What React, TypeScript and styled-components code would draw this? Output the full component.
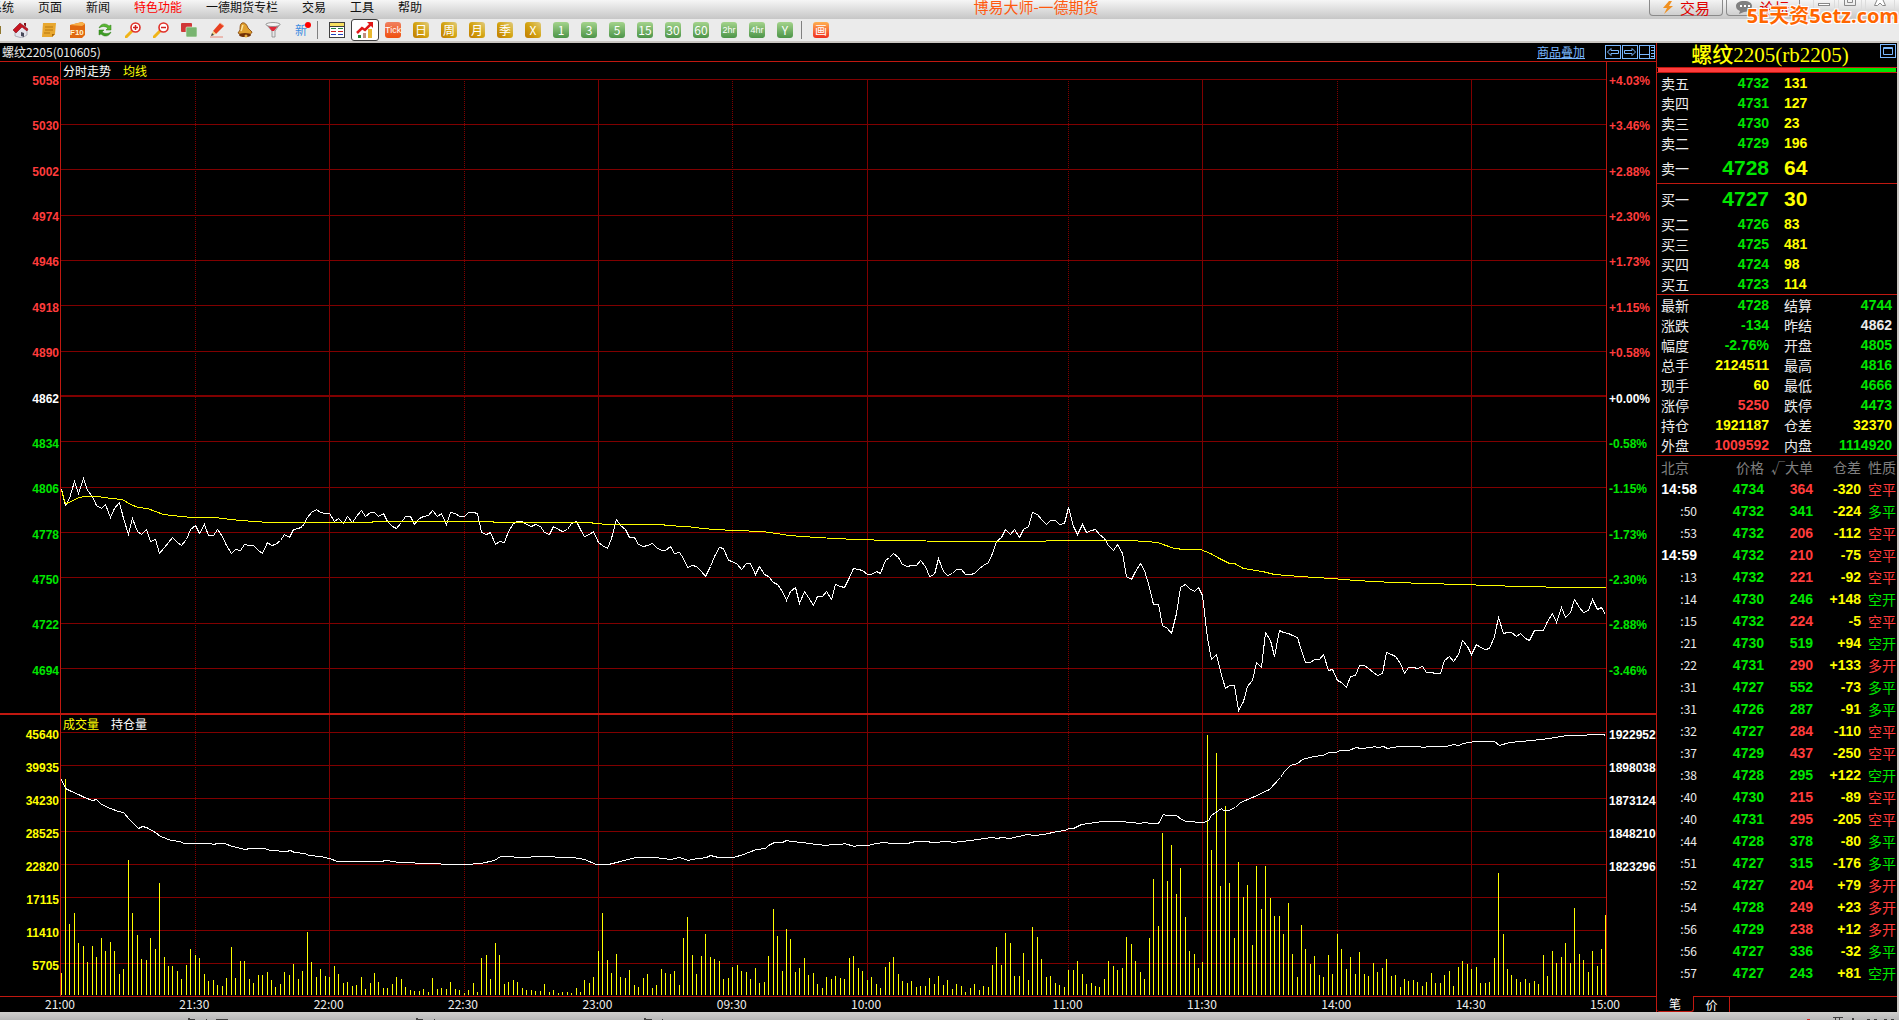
import React from 'react';
import styled, { createGlobalStyle, css } from 'styled-components';

const C = {
  line: '#c01810',
  grid: '#800000',
  up: '#ff3c3c',
  down: '#00e600',
  hot: '#ffff00',
  plain: '#ececec',
  dim: '#808080',
  link: '#7ab8ff',
};

type Tone = 'up' | 'down' | 'hot' | 'plain' | 'dim';

const sans = `'Liberation Sans', 'Noto Sans CJK SC', sans-serif`;
const cjk = `'Noto Sans CJK SC', 'Liberation Sans', sans-serif`;

const Global = createGlobalStyle`
  * { box-sizing: border-box; }
  html, body { margin: 0; background: #000; }
  body { font-family: ${cjk}; font-size: 12px; color: ${C.plain}; }
  button { font: inherit; padding: 0; margin: 0; border: 0; background: none; color: inherit; }
  a { color: inherit; text-decoration: none; }
`;

const Shell = styled.div`
  display: flex;
  flex-direction: column;
  height: 100vh;
  min-height: 900px;
  overflow: hidden;
`;

/* ---------- menu bar ---------- */

const MenuBar = styled.header`
  position: relative;
  display: flex;
  justify-content: space-between;
  flex: none;
  height: 19px;
  background: linear-gradient(#f6f6f6, #c6c6c6);
`;
const Menu = styled.nav`
  display: flex;
  gap: 24px;
  margin-left: -10px;
`;
const MenuItem = styled.a<{ $hot?: boolean }>`
  font-size: 12px;
  line-height: 14px;
  white-space: nowrap;
  color: ${(p) => (p.$hot ? '#ff0000' : '#101010')};
`;
const AppTitle = styled.h1`
  flex: none;
  margin: 0;
  font-size: 15px;
  font-weight: 400;
  line-height: 13px;
  color: #ff5a10;
`;
const MenuSide = styled.div<{ $share: number }>`
  flex: ${(p) => p.$share} 1 0;
  display: flex;
`;
const Controls = styled(MenuSide)`
  justify-content: flex-end;
  gap: 3px;
  padding-right: 4px;
`;
const WindowButtons = styled.div`
  display: flex;
  gap: 3px;
  margin-left: 10px;
`;
const PillButton = styled.button`
  display: flex;
  align-items: center;
  justify-content: center;
  gap: 6px;
  width: 74px;
  height: 16px;
  border: 1px solid #8a8a8a;
  border-top: 0;
  border-radius: 0 0 4px 4px;
  background: linear-gradient(#f4f4f4, #cfcfcf);
  color: #e00000;
  font-size: 15px;
  line-height: 12px;
`;
const WinButton = styled.button<{ $w: number }>`
  width: ${(p) => p.$w}px;
  height: 10px;
  display: flex;
  justify-content: center;
  border: 1px solid #dcdcdc;
  border-top: 0;
`;
const Watermark = styled.div`
  position: absolute;
  z-index: 2;
  right: 0;
  top: 2px;
  font-family: 'Open Sans', 'Noto Sans CJK SC', sans-serif;
  font-size: 20px;
  font-weight: 700;
  line-height: 28px;
  color: #ff6600;
  text-shadow: 1px 1px 0 #fff, -1px 1px 0 #fff, 1px -1px 0 #fff, -1px -1px 0 #fff;
`;

/* ---------- toolbar ---------- */

const Toolbar = styled.div`
  display: flex;
  align-items: center;
  flex: none;
  height: 24px;
  background: #ebebeb;
  border-bottom: 2px solid #cac6c2;
`;
const Tool = styled.button<{ $active?: boolean }>`
  display: flex;
  align-items: center;
  justify-content: center;
  width: 28px;
  height: 22px;
  ${(p) =>
    p.$active &&
    css`
      background: #fff;
      border: 1px solid #404040;
      border-radius: 3px;
    `}
`;
const Grip = styled.span`
  width: 1px;
  height: 8px;
  margin-right: 6px;
  background: #907830;
`;
const Divider = styled.span`
  width: 1px;
  height: 18px;
  margin: 0 5px 0 2px;
  background: #808080;
`;
const fills = {
  gold: 'linear-gradient(to top right, #c07c00, #d4a410 50%, #e0cc80)',
  green: 'linear-gradient(#a4d48c, #4c9448)',
  tick: 'linear-gradient(#f08060, #f05010)',
  paint: 'linear-gradient(#ffb050, #f03020)',
};
const Badge = styled.span<{ $fill: keyof typeof fills }>`
  width: 16px;
  height: 16px;
  border-radius: 3px;
  background: ${(p) => fills[p.$fill]};
  color: #fff;
  font-size: 12px;
  line-height: 15px;
  text-align: center;
`;
const NarrowBadge = styled(Badge)`
  font-family: 'Liberation Sans', sans-serif;
  font-size: 9px;
  line-height: 16px;
`;
const NewMark = styled.span`
  position: relative;
  font-size: 12px;
  line-height: 16px;
  color: #3c8ce0;
  &::after {
    content: '';
    position: absolute;
    right: -4px;
    top: 0;
    width: 6px;
    height: 6px;
    border-radius: 50%;
    background: #ff0000;
  }
`;

/* ---------- chart ---------- */

const Main = styled.main`
  display: flex;
  flex: 1;
  min-height: 0;
  border-right: 2px solid #cac6c2;
`;
const ChartColumn = styled.section`
  display: flex;
  flex-direction: column;
  flex: 1;
  min-width: 0;
  border-right: 1px solid ${C.line};
`;
const ChartHead = styled.div`
  display: flex;
  align-items: center;
  flex: none;
  height: 19px;
  padding: 0 1px 0 2px;
  border-bottom: 1px solid ${C.line};
  line-height: 18px;
`;
const HeadTools = styled.div`
  display: flex;
  align-items: center;
  gap: 1px;
  margin-left: auto;
  color: ${C.link};
`;
const OverlayLink = styled.a`
  margin-right: 19px;
  color: ${C.link};
  text-decoration: underline;
`;
const IconButton = styled.button`
  display: flex;
  width: 16px;
  height: 14px;
  color: ${C.link};
`;
const Pane = styled.div<{ $weight: number }>`
  display: flex;
  flex: ${(p) => p.$weight} 1 0;
  min-height: 0;
`;
const Splitter = styled.div`
  flex: none;
  height: 2px;
  background: ${C.line};
`;
const Axis = styled.ol<{ $side: 'left' | 'right'; $top: number; $bottom: number }>`
  display: flex;
  flex-direction: column;
  flex: none;
  margin: 0;
  list-style: none;
  font: 700 12px/16px ${sans};
  padding: ${(p) => p.$top}px 1px ${(p) => p.$bottom}px 2px;
  ${(p) =>
    p.$side === 'left'
      ? css`
          width: 61px;
          text-align: right;
          border-right: 1px solid ${C.line};
        `
      : css`
          width: 50px;
          border-left: 1px solid ${C.line};
        `}
`;
const AxisLabel = styled.li<{ $tone: Tone }>`
  flex: 1 1 0;
  min-height: 0;
  white-space: nowrap;
  color: ${(p) => (p.$tone === 'plain' ? '#fff' : C[p.$tone])};
`;
const Plot = styled.div`
  position: relative;
  flex: 1;
  min-width: 0;
`;
const Canvas = styled.svg`
  position: absolute;
  inset: 0;
  width: 100%;
  height: 100%;
  shape-rendering: crispEdges;
`;
const Legend = styled.div`
  position: absolute;
  left: 2px;
  top: 0;
  display: flex;
  gap: 12px;
  line-height: 18px;
`;
const LegendItem = styled.span<{ $tone: Tone }>`
  color: ${(p) => (p.$tone === 'plain' ? '#fff' : C[p.$tone])};
`;
const TimeRow = styled.div`
  display: grid;
  grid-template-columns: repeat(6, 30fr) 45fr repeat(4, 30fr) 66px;
  flex: none;
  height: 16px;
  padding-left: 45px;
  border-top: 1px solid ${C.line};
  line-height: 14px;
`;

const LABEL_PRICES = [5058, 5030, 5002, 4974, 4946, 4918, 4890, 4862, 4834, 4806, 4778, 4750, 4722, 4694];
const LABEL_PCTS = ['+4.03%', '+3.46%', '+2.88%', '+2.30%', '+1.73%', '+1.15%', '+0.58%', '+0.00%', '-0.58%', '-1.15%', '-1.73%', '-2.30%', '-2.88%', '-3.46%'];
const LABEL_VOLUMES = [45640, 39935, 34230, 28525, 22820, 17115, 11410, 5705];
const LABEL_OPEN_INTEREST = ['1922952', '1898038', '1873124', '1848210', '1823296', '', '', ''];
const TIMES = ['21:00', '21:30', '22:00', '22:30', '23:00', '09:30', '10:00', '11:00', '11:30', '14:00', '14:30', '15:00'];

const SESSION_MINUTES = 345;
const PLOT_W = 1545;
const PRICE_H = 651;
const VOLUME_H = 281;

const PRICE_GRID = [17, 62, 107, 153, 198, 243, 289, 333, 379, 425, 470, 515, 561, 606];
const VOLUME_GRID = [17, 50, 83, 116, 149, 182, 215, 248];
const TIME_GRID: { minute: number; dotted: boolean }[] = [
  { minute: 30, dotted: true },
  { minute: 60, dotted: false },
  { minute: 90, dotted: true },
  { minute: 120, dotted: false },
  { minute: 150, dotted: true },
  { minute: 180, dotted: false },
  { minute: 225, dotted: true },
  { minute: 255, dotted: false },
  { minute: 285, dotted: true },
  { minute: 315, dotted: false },
];

// One sample per trading minute, as a depth below the top of the price pane.
const PRICE = [
  427, 443, 436, 419, 431, 416, 428, 434, 443, 446, 442, 455, 446, 440, 456, 472, 456, 469, 472, 467,
  479, 477, 491, 485, 480, 475, 480, 483, 477, 467, 463, 471, 462, 473, 473, 467, 474, 483, 491, 487,
  488, 482, 483, 483, 488, 491, 480, 483, 482, 478, 472, 475, 467, 466, 464, 455, 450, 447, 450, 451,
  451, 459, 456, 461, 454, 460, 454, 448, 454, 450, 450, 454, 451, 459, 464, 466, 460, 454, 454, 462,
  456, 454, 453, 448, 454, 451, 462, 450, 451, 454, 454, 450, 450, 451, 470, 472, 470, 482, 479, 480,
  469, 461, 459, 459, 462, 464, 462, 464, 470, 472, 464, 467, 469, 467, 461, 459, 467, 474, 472, 469,
  480, 483, 486, 476, 457, 463, 467, 475, 475, 482, 484, 483, 481, 485, 488, 488, 484, 491, 490, 496,
  505, 503, 504, 509, 514, 504, 494, 485, 486, 498, 499, 502, 507, 501, 501, 512, 504, 512, 514, 520,
  522, 529, 538, 529, 525, 541, 529, 535, 543, 534, 534, 529, 537, 522, 524, 525, 515, 506, 507, 508,
  512, 512, 509, 511, 498, 495, 491, 495, 502, 504, 503, 503, 498, 504, 514, 512, 496, 509, 513, 511,
  507, 507, 512, 512, 511, 506, 503, 500, 491, 479, 475, 467, 472, 467, 475, 467, 464, 450, 452, 457,
  462, 458, 458, 462, 461, 445, 464, 472, 462, 470, 468, 467, 472, 476, 483, 488, 482, 491, 514, 517,
  509, 501, 508, 525, 542, 542, 563, 566, 571, 551, 525, 522, 526, 529, 525, 533, 576, 597, 592, 609,
  626, 623, 623, 648, 639, 624, 618, 600, 605, 570, 578, 594, 568, 570, 571, 573, 575, 588, 600, 600,
  597, 597, 592, 608, 607, 618, 620, 625, 614, 613, 603, 603, 606, 610, 613, 611, 590, 592, 594, 601,
  611, 605, 605, 606, 604, 610, 610, 611, 611, 598, 594, 599, 592, 578, 584, 592, 582, 585, 587, 586,
  574, 555, 571, 570, 570, 574, 571, 576, 578, 568, 568, 568, 559, 551, 560, 545, 555, 550, 537, 545,
  550, 548, 537, 547, 545, 552,
];

// Bar heights per trading minute.
const VOLUME = [
  22, 216, 71, 82, 52, 49, 33, 49, 38, 57, 44, 53, 44, 21, 26, 135, 82, 60, 36, 35,
  57, 46, 112, 38, 29, 29, 24, 16, 30, 46, 40, 37, 21, 14, 15, 10, 9, 17, 48, 17,
  34, 34, 16, 12, 20, 20, 23, 15, 8, 11, 23, 20, 31, 16, 24, 63, 33, 18, 26, 19,
  18, 29, 21, 12, 13, 9, 10, 18, 6, 12, 22, 13, 7, 7, 11, 18, 16, 8, 5, 4,
  4, 6, 3, 17, 6, 7, 6, 13, 6, 5, 2, 5, 12, 3, 37, 40, 16, 52, 40, 11,
  13, 15, 13, 7, 5, 5, 4, 4, 11, 3, 5, 2, 3, 3, 2, 7, 3, 15, 12, 18,
  44, 82, 35, 22, 41, 18, 17, 25, 10, 8, 17, 21, 7, 10, 26, 22, 21, 24, 10, 57,
  78, 40, 21, 39, 61, 38, 36, 34, 16, 17, 28, 30, 24, 23, 16, 27, 12, 13, 39, 86,
  59, 24, 66, 56, 23, 27, 37, 20, 22, 11, 7, 18, 16, 19, 17, 16, 37, 39, 27, 24,
  15, 18, 11, 7, 28, 33, 38, 21, 14, 12, 14, 8, 9, 9, 17, 11, 19, 10, 15, 6,
  11, 9, 3, 7, 11, 5, 9, 8, 30, 48, 30, 62, 52, 19, 19, 42, 15, 68, 58, 36,
  18, 19, 12, 10, 8, 25, 25, 34, 21, 11, 12, 9, 8, 16, 34, 29, 25, 27, 58, 51,
  34, 23, 16, 57, 116, 69, 162, 114, 150, 101, 127, 78, 44, 41, 27, 33, 260, 145, 242, 109,
  189, 112, 57, 133, 98, 110, 50, 129, 86, 129, 97, 79, 79, 61, 92, 41, 18, 70, 46, 31,
  39, 20, 18, 40, 21, 61, 46, 26, 38, 21, 43, 21, 19, 32, 23, 27, 36, 19, 20, 8,
  16, 14, 15, 13, 9, 13, 22, 12, 12, 20, 24, 9, 28, 34, 31, 26, 28, 12, 12, 13,
  37, 122, 61, 26, 20, 16, 13, 16, 12, 14, 11, 40, 19, 44, 32, 38, 52, 32, 87, 41,
  35, 23, 44, 29, 46, 80,
];

type Points = [number, number][];

const AVERAGE: Points = [
  [0, 428], [4, 441], [8, 440], [13, 437], [18, 435], [24, 434], [37, 434], [42, 435], [50, 436], [61, 437],
  [69, 442], [77, 445], [86, 446], [94, 449], [102, 452], [111, 453], [130, 455], [153, 455], [169, 457],
  [180, 458], [207, 460], [310, 460], [312, 459], [431, 459], [433, 460], [530, 460], [532, 461], [549, 462],
  [602, 462], [604, 463], [625, 464], [642, 466], [653, 467], [673, 468], [701, 469], [715, 471], [728, 473],
  [755, 475], [794, 477], [830, 478], [898, 479], [964, 479], [1005, 478], [1067, 478], [1085, 479],
  [1096, 480], [1113, 486], [1123, 487], [1139, 487], [1149, 491], [1158, 496], [1168, 501], [1173, 501],
  [1182, 506], [1201, 509], [1213, 512], [1239, 514], [1270, 516], [1294, 518], [1332, 520], [1366, 521],
  [1430, 523], [1457, 524], [1511, 525], [1545, 525],
];

const OPEN_INTEREST: Points = [
  [0, 64], [4, 73], [10, 76], [17, 79], [23, 82], [31, 85], [35, 84], [40, 89], [49, 93], [57, 96], [62, 97],
  [68, 104], [72, 108], [77, 113], [81, 111], [85, 112], [94, 117], [99, 121], [110, 125], [118, 126],
  [123, 128], [149, 128], [152, 129], [156, 128], [163, 128], [171, 131], [184, 134], [188, 133], [203, 133],
  [209, 135], [225, 136], [229, 135], [233, 137], [243, 138], [248, 140], [259, 141], [268, 143], [276, 146],
  [319, 146], [325, 145], [337, 147], [370, 148], [388, 149], [404, 149], [419, 148], [433, 145], [439, 141],
  [466, 142], [474, 141], [512, 142], [523, 144], [535, 149], [547, 149], [559, 146], [566, 144], [575, 142],
  [593, 142], [609, 144], [618, 142], [627, 145], [630, 144], [645, 142], [649, 140], [657, 142], [672, 142],
  [682, 139], [695, 134], [704, 133], [707, 130], [713, 127], [721, 127], [725, 125], [730, 126], [741, 127],
  [755, 129], [765, 130], [770, 129], [780, 129], [783, 128], [793, 131], [796, 130], [807, 130], [814, 128],
  [824, 127], [829, 128], [846, 128], [854, 126], [866, 126], [870, 127], [888, 126], [891, 127], [909, 125],
  [930, 122], [936, 123], [940, 122], [948, 123], [966, 119], [973, 120], [982, 119], [996, 116], [1004, 115],
  [1007, 113], [1012, 113], [1020, 109], [1041, 106], [1059, 106], [1079, 108], [1082, 107], [1091, 108],
  [1097, 108], [1102, 99], [1105, 100], [1115, 100], [1120, 104], [1125, 106], [1142, 107], [1147, 105],
  [1150, 100], [1160, 93], [1162, 95], [1167, 95], [1174, 92], [1179, 87], [1191, 82], [1208, 74], [1219, 62],
  [1223, 56], [1229, 50], [1236, 48], [1241, 44], [1252, 41], [1262, 40], [1267, 37], [1274, 37], [1279, 35],
  [1287, 35], [1295, 32], [1299, 33], [1311, 32], [1312, 31], [1317, 32], [1322, 31], [1326, 33], [1338, 31],
  [1358, 31], [1361, 32], [1368, 31], [1385, 31], [1392, 29], [1397, 30], [1402, 28], [1414, 26], [1433, 26],
  [1438, 30], [1448, 27], [1470, 25], [1488, 23], [1505, 20], [1519, 20], [1532, 19], [1542, 19], [1544, 20],
];

const xOf = (minute: number) => Math.min(PLOT_W - 1, Math.floor((minute * PLOT_W) / SESSION_MINUTES));
const trace = (pts: Points) => pts.map(([x, y]) => `${x + 0.5},${y + 0.5}`).join(' ');

function Grid({ rows, top, height, strong }: { rows: number[]; top: number; height: number; strong?: number }) {
  return (
    <g stroke={C.grid} strokeWidth={1}>
      {rows.map((y) => (
        <rect key={y} x={0} y={y} width={PLOT_W} height={y === strong ? 2 : 1} fill={C.grid} stroke="none" />
      ))}
      {TIME_GRID.map(({ minute, dotted }) => (
        <line
          key={minute}
          x1={xOf(minute) + 0.5}
          x2={xOf(minute) + 0.5}
          y1={top}
          y2={height}
          strokeDasharray={dotted ? '1 1' : undefined}
        />
      ))}
    </g>
  );
}

function PricePlot() {
  return (
    <Plot>
      <Canvas viewBox={`0 0 ${PLOT_W} ${PRICE_H}`} preserveAspectRatio="none" aria-label="分时走势">
        <Grid rows={PRICE_GRID} top={17} height={PRICE_H} strong={333} />
        <polyline points={trace(PRICE.map((y, i) => [xOf(i), y]))} fill="none" stroke="#fff" />
        <polyline points={trace(AVERAGE)} fill="none" stroke="#ffff00" />
      </Canvas>
      <Legend>
        <LegendItem $tone="plain">分时走势</LegendItem>
        <LegendItem $tone="hot">均线</LegendItem>
      </Legend>
    </Plot>
  );
}

function VolumePlot() {
  return (
    <Plot>
      <Canvas viewBox={`0 0 ${PLOT_W} ${VOLUME_H}`} preserveAspectRatio="none" aria-label="成交量">
        <Grid rows={VOLUME_GRID} top={0} height={VOLUME_H} />
        {VOLUME.map((h, i) => (
          <rect key={i} x={xOf(i)} y={VOLUME_H - 1 - h} width={1} height={h} fill="#ffff00" />
        ))}
        <polyline points={trace(OPEN_INTEREST)} fill="none" stroke="#fff" />
      </Canvas>
      <Legend>
        <LegendItem $tone="hot">成交量</LegendItem>
        <LegendItem $tone="plain">持仓量</LegendItem>
      </Legend>
    </Plot>
  );
}

/* ---------- quote sidebar ---------- */

const Sidebar = styled.aside`
  display: flex;
  flex-direction: column;
  flex: none;
  width: 240px;
  overflow: hidden;
`;
const QuoteHead = styled.div`
  position: relative;
  display: flex;
  align-items: center;
  justify-content: center;
  flex: none;
  height: 24px;
  padding-right: 14px;
`;
const QuoteTitle = styled.h2`
  margin: 0;
  font: 500 21px/24px 'Liberation Serif', 'Noto Sans CJK SC', serif;
  color: ${C.hot};
  white-space: nowrap;
`;
const Corner = styled(IconButton)`
  position: absolute;
  right: 1px;
  top: 1px;
`;
const Balance = styled.div`
  display: flex;
  flex: none;
  height: 6px;
  padding: 0 1px;
  border-top: 1px solid ${C.line};
  border-bottom: 1px solid ${C.line};
`;
const BalancePart = styled.span<{ $tone: Tone; $share: number }>`
  flex: ${(p) => p.$share} 1 0;
  background: ${(p) => C[p.$tone]};
`;
const Sheet = styled.table<{ $ruled?: boolean }>`
  flex: none;
  width: 100%;
  table-layout: fixed;
  border-collapse: separate;
  border-spacing: 0;
  border-bottom: ${(p) => (p.$ruled ? `1px solid ${C.line}` : '0')};
`;
const Row = styled.tr<{ $h: number }>`
  height: ${(p) => p.$h}px;
`;
const Name = styled.th<{ $inset?: number; $tone?: Tone; $align?: 'left' | 'right' }>`
  padding: 0 0 0 ${(p) => p.$inset ?? 0}px;
  font-size: 14px;
  font-weight: 400;
  line-height: 18px;
  white-space: nowrap;
  text-align: ${(p) => p.$align ?? 'left'};
  color: ${(p) => C[p.$tone ?? 'plain']};
`;
const Num = styled.td<{ $tone: Tone; $big?: boolean; $left?: boolean }>`
  padding: 0 0 0 ${(p) => (p.$left ? 15 : 0)}px;
  text-align: ${(p) => (p.$left ? 'left' : 'right')};
  font: 700 ${(p) => (p.$big ? 21 : 14)}px/18px ${sans};
  color: ${(p) => C[p.$tone]};
`;
const Clock = styled.td<{ $full: boolean }>`
  padding: 0;
  text-align: right;
  color: ${(p) => (p.$full ? '#fff' : C.plain)};
  font: ${(p) => (p.$full ? `700 14px/18px ${sans}` : `400 12px/18px ${cjk}`)};
`;
const Kind = styled.td<{ $tone: Tone }>`
  padding: 0 0 0 7px;
  font-size: 14px;
  line-height: 18px;
  white-space: nowrap;
  color: ${(p) => C[p.$tone]};
`;
const Tabs = styled.div`
  display: flex;
  flex: none;
  height: 16px;
  margin-top: auto;
  font-size: 12px;
  line-height: 14px;
`;
const Tab = styled.button<{ $active?: boolean }>`
  width: 36px;
  height: 16px;
  color: #fff;
  ${(p) =>
    p.$active
      ? css`
          width: 37px;
          border-right: 1px solid ${C.line};
          border-bottom: 1px solid ${C.line};
          border-radius: 0 0 3px 3px;
        `
      : css`
          border-top: 1px solid ${C.line};
          border-right: 1px solid ${C.line};
        `}
`;
const TabRest = styled.span`
  flex: 1;
  border-top: 1px solid ${C.line};
`;

const ASKS = [
  ['卖五', '4732', '131'],
  ['卖四', '4731', '127'],
  ['卖三', '4730', '23'],
  ['卖二', '4729', '196'],
  ['卖一', '4728', '64'],
];
const BIDS = [
  ['买一', '4727', '30'],
  ['买二', '4726', '83'],
  ['买三', '4725', '481'],
  ['买四', '4724', '98'],
  ['买五', '4723', '114'],
];
const STATS: [string, string, Tone, string, string, Tone][] = [
  ['最新', '4728', 'down', '结算', '4744', 'down'],
  ['涨跌', '-134', 'down', '昨结', '4862', 'plain'],
  ['幅度', '-2.76%', 'down', '开盘', '4805', 'down'],
  ['总手', '2124511', 'hot', '最高', '4816', 'down'],
  ['现手', '60', 'hot', '最低', '4666', 'down'],
  ['涨停', '5250', 'up', '跌停', '4473', 'down'],
  ['持仓', '1921187', 'hot', '仓差', '32370', 'hot'],
  ['外盘', '1009592', 'up', '内盘', '1114920', 'down'],
];
const TICKS: [string, string, string, Tone, string, string][] = [
  ['14:58', '4734', '364', 'up', '-320', '空平'],
  [':50', '4732', '341', 'down', '-224', '多平'],
  [':53', '4732', '206', 'up', '-112', '空平'],
  ['14:59', '4732', '210', 'up', '-75', '空平'],
  [':13', '4732', '221', 'up', '-92', '空平'],
  [':14', '4730', '246', 'down', '+148', '空开'],
  [':15', '4732', '224', 'up', '-5', '空平'],
  [':21', '4730', '519', 'down', '+94', '空开'],
  [':22', '4731', '290', 'up', '+133', '多开'],
  [':31', '4727', '552', 'down', '-73', '多平'],
  [':31', '4726', '287', 'down', '-91', '多平'],
  [':32', '4727', '284', 'up', '-110', '空平'],
  [':37', '4729', '437', 'up', '-250', '空平'],
  [':38', '4728', '295', 'down', '+122', '空开'],
  [':40', '4730', '215', 'up', '-89', '空平'],
  [':40', '4731', '295', 'up', '-205', '空平'],
  [':44', '4728', '378', 'down', '-80', '多平'],
  [':51', '4727', '315', 'down', '-176', '多平'],
  [':52', '4727', '204', 'up', '+79', '多开'],
  [':54', '4728', '249', 'up', '+23', '多开'],
  [':56', '4729', '238', 'up', '+12', '多开'],
  [':56', '4727', '336', 'down', '-32', '多平'],
  [':57', '4727', '243', 'down', '+81', '空开'],
];

function Depth({ rows, best }: { rows: string[][]; best: number }) {
  return (
    <Sheet $ruled>
      <colgroup>
        <col width={44} />
        <col width={68} />
        <col />
      </colgroup>
      <tbody>
        {rows.map(([name, price, lots], i) => (
          <Row key={name} $h={i === best ? 30 : 20}>
            <Name scope="row" $inset={4}>{name}</Name>
            <Num $tone="down" $big={i === best}>{price}</Num>
            <Num $tone="hot" $big={i === best} $left>{lots}</Num>
          </Row>
        ))}
      </tbody>
    </Sheet>
  );
}

/* ---------- status bar ---------- */

const Status = styled.footer`
  display: flex;
  flex: none;
  height: 8px;
  background: linear-gradient(#d0cfcd, #b8b8b8);
`;

/* ---------- toolbar drawings ---------- */

const Icon = ({ children, size = 16 }: { children: React.ReactNode; size?: number }) => (
  <svg width={size} height={16} viewBox={`0 0 ${size} 16`} aria-hidden="true">{children}</svg>
);

const HomeIcon = () => (
  <Icon>
    <path d="M2 8v6l7 2 5-3V8L9 4z" fill="#e4e4ec" stroke="#8c8c98" strokeWidth=".6" />
    <path d="M0 8 7 1l8 6-1 2-5-4-6 6z" fill="#c81420" stroke="#80101c" strokeWidth=".6" />
    <path d="M11 1h2v4l-2-2z" fill="#801018" />
    <path d="M8 10l3 1v4l-3-1z" fill="#484858" />
  </Icon>
);
const NoteIcon = () => (
  <Icon>
    <path d="M2 1h13l-1 11-3 3H1z" fill="#e8a830" />
    <path d="M11 15l3-3h-3z" fill="#a86808" />
    <path d="M4 5h8M4 8h8M3 11h6" stroke="#b87810" />
  </Icon>
);
const F10Icon = () => (
  <Icon>
    <path d="M1 3 13 0l3 2v11l-3 3H1z" fill="#e06810" />
    <path d="M1 3l12-3 3 2-3 2z" fill="#f8b048" />
    <text x="1" y="13" fontSize="8" fontWeight="700" fill="#fff4d0" fontFamily="Liberation Sans">F10</text>
  </Icon>
);
const RefreshIcon = () => (
  <Icon>
    <path d="M2 6C4 1 9 1 12 4l2-1v5H9l2-2C8 4 5 4 2 6z" fill="#58b830" stroke="#2c7c14" strokeWidth=".5" />
    <path d="M14 10c-2 5-7 5-10 2l-2 1V8h5l-2 2c3 2 6 2 9 0z" fill="#3c9c24" stroke="#2c7c14" strokeWidth=".5" />
  </Icon>
);
const ZoomIcon = ({ plus }: { plus?: boolean }) => (
  <Icon>
    <path d="M1 15l6-6" stroke="#f0b418" strokeWidth="3" strokeLinecap="round" />
    <circle cx="10.500" cy="5.500" r="4.500" fill="#fff" stroke="#e03028" strokeWidth="1.600" />
    <path d={plus ? 'M8 5.500h5M10.500 3v5' : 'M8 5.500h5'} stroke="#d02020" strokeWidth="1.500" />
  </Icon>
);
const WindowsIcon = () => (
  <Icon>
    <rect x="0" y="1" width="11" height="9" rx="1" fill="#d03838" />
    <rect x="5" y="5" width="11" height="10" rx="1" fill="#78b470" stroke="#e8f4e4" strokeWidth=".6" />
  </Icon>
);
const PencilIcon = () => (
  <Icon>
    <path d="M4 9l7-8 4 3-8 8z" fill="#e84020" />
    <path d="M4 9l3 3-5 2z" fill="#f4d080" />
    <path d="M2 14l1-3 2 2z" fill="#404040" />
    <path d="M11 1l4 3" stroke="#f8a080" />
    <path d="M1 15h13" stroke="#e88878" />
  </Icon>
);
const BellIcon = () => (
  <Icon>
    <path d="M5 1c3-1 5 2 6 5l4 4c0 3-9 5-14 1l2-3c0-3 0-6 2-7z" fill="#e0a030" stroke="#804008" strokeWidth=".8" />
    <path d="M6 3c-1 2-1 4-2 6" stroke="#fce4a0" strokeWidth="1.500" fill="none" />
    <ellipse cx="8" cy="13" rx="6" ry="2" fill="#703008" />
    <circle cx="9" cy="14" r="1.500" fill="#e8b040" />
  </Icon>
);
const FunnelIcon = () => (
  <Icon>
    <path d="M1 2h14L10 9v6H7V9z" fill="#e8e8e8" stroke="#888" strokeWidth=".8" />
    <path d="M3 4h10L9 9H7z" fill="#e02838" />
    <ellipse cx="8" cy="2.500" rx="7" ry="2" fill="#f4f4f4" stroke="#888" strokeWidth=".8" />
  </Icon>
);
const TableIcon = () => (
  <Icon>
    <rect x="0" y="0" width="16" height="16" fill="#404040" />
    <rect x="1" y="1" width="14" height="3" fill="#f8e060" />
    <rect x="1" y="5" width="14" height="10" fill="#fff" />
    <path d="M2 6.500h5M9 6.500h5" stroke="#208040" />
    <path d="M2 9.500h5M9 9.500h5" stroke="#d02020" />
    <path d="M2 12.500h5M9 12.500h5" stroke="#2040c0" />
  </Icon>
);
const TrendIcon = () => (
  <Icon size={18}>
    <path d="M2 13h3v3H2z" fill="#208030" />
    <path d="M7 11h3v5H7z" fill="#c09080" />
    <path d="M12 7h4v9h-4z" fill="#e8b830" />
    <path d="M1 11l5-5 3 2 6-6" fill="none" stroke="#e01818" strokeWidth="2.500" />
    <path d="M11 0h6v6z" fill="#e01818" />
  </Icon>
);

const PERIODS: [string, keyof typeof fills][] = [
  ['日', 'gold'], ['周', 'gold'], ['月', 'gold'], ['季', 'gold'], ['X', 'gold'],
  ['1', 'green'], ['3', 'green'], ['5', 'green'], ['15', 'green'], ['30', 'green'], ['60', 'green'],
  ['2hr', 'green'], ['4hr', 'green'], ['Y', 'green'],
];

const Frame = ({ children }: { children: React.ReactNode }) => (
  <svg width="16" height="14" viewBox="0 0 16 14" fill="none" stroke="currentColor" aria-hidden="true">
    <rect x=".5" y=".5" width="15" height="13" />
    {children}
  </svg>
);

export default function App() {
  return (
    <Shell>
      <Global />
      <MenuBar>
        <MenuSide $share={11}>
          <Menu>
            {['系统', '页面', '新闻', '特色功能', '一德期货专栏', '交易', '工具', '帮助'].map((m) => (
              <MenuItem key={m} href="#" $hot={m === '特色功能'}>{m}</MenuItem>
            ))}
          </Menu>
        </MenuSide>
        <AppTitle>博易大师-一德期货</AppTitle>
        <Controls $share={9}>
          <PillButton>
            <svg width="12" height="13" viewBox="0 0 12 13" aria-hidden="true">
              <path d="M7 0 1 7h4l-3 6 9-8H7l3-5z" fill="#f09020" />
            </svg>
            交易
          </PillButton>
          <PillButton>
            <svg width="17" height="13" viewBox="0 0 17 13" aria-hidden="true">
              <path d="M8 0c5 0 8 2 8 5s-3 6-8 6l-5 2 1-3C1 9 0 7 0 5c0-3 3-5 8-5z" fill="#808080" />
              <path d="M4 5h2M8 5h2M12 5h2" stroke="#fff" strokeWidth="2" />
            </svg>
            论坛
          </PillButton>
          <WindowButtons>
            <WinButton $w={22} aria-label="最小化">
              <svg width="14" height="9" fill="#fff" stroke="#888"><rect x="1.500" y="3.500" width="11" height="2" /></svg>
            </WinButton>
            <WinButton $w={24} aria-label="最大化">
              <svg width="14" height="9" fill="none" stroke="#888"><path d="M1.500 0v5.500h11V0M4.500 0v2.500h5V0" /></svg>
            </WinButton>
            <WinButton $w={30} aria-label="关闭">
              <svg width="14" height="9" fill="#fff" stroke="#888"><path d="M4 0 1.500 5.500h3L7 3l2.500 2.500h3L10 0" /></svg>
            </WinButton>
          </WindowButtons>
        </Controls>
        <Watermark>5E天资5etz.com</Watermark>
      </MenuBar>

      <Toolbar>
        <Grip />
        <Tool aria-label="首页"><HomeIcon /></Tool>
        <Tool aria-label="资讯"><NoteIcon /></Tool>
        <Tool aria-label="F10"><F10Icon /></Tool>
        <Tool aria-label="刷新"><RefreshIcon /></Tool>
        <Tool aria-label="放大"><ZoomIcon plus /></Tool>
        <Tool aria-label="缩小"><ZoomIcon /></Tool>
        <Tool aria-label="叠加"><WindowsIcon /></Tool>
        <Tool aria-label="画线"><PencilIcon /></Tool>
        <Tool aria-label="预警"><BellIcon /></Tool>
        <Tool aria-label="筛选"><FunnelIcon /></Tool>
        <Tool><NewMark>新</NewMark></Tool>
        <Divider />
        <Tool aria-label="报价"><TableIcon /></Tool>
        <Tool aria-label="分时" $active><TrendIcon /></Tool>
        <Tool><NarrowBadge $fill="tick">Tick</NarrowBadge></Tool>
        {PERIODS.map(([label, fill]) => (
          <Tool key={label}>
            {label.length > 2 ? <NarrowBadge $fill={fill}>{label}</NarrowBadge> : <Badge $fill={fill}>{label}</Badge>}
          </Tool>
        ))}
        <Divider />
        <Tool><Badge $fill="paint">画</Badge></Tool>
      </Toolbar>

      <Main>
        <ChartColumn>
          <ChartHead>
            <span>螺纹2205(010605)</span>
            <HeadTools>
              <OverlayLink href="#">商品叠加</OverlayLink>
              <IconButton aria-label="前一个">
                <Frame><path d="M2.500 7 6 3.500v2h7.500v3H6v2z" /></Frame>
              </IconButton>
              <IconButton aria-label="后一个">
                <Frame><path d="M13.500 7 10 3.500v2H2.500v3H10v2z" /></Frame>
              </IconButton>
              <IconButton aria-label="布局">
                <Frame><path d="M0 9.500h10.500M10.500 0v14M12 2.500h3M12 5.500h3M12 8.500h3M12 11.500h3" /></Frame>
              </IconButton>
            </HeadTools>
          </ChartHead>

          <Pane $weight={PRICE_H}>
            <Axis $side="left" $top={11} $bottom={5}>
              {LABEL_PRICES.map((p) => (
                <AxisLabel key={p} $tone={p > 4862 ? 'up' : p < 4862 ? 'down' : 'plain'}>{p}</AxisLabel>
              ))}
            </Axis>
            <PricePlot />
            <Axis $side="right" $top={11} $bottom={5}>
              {LABEL_PCTS.map((p, i) => (
                <AxisLabel key={p} $tone={i < 7 ? 'up' : i > 7 ? 'down' : 'plain'}>{p}</AxisLabel>
              ))}
            </Axis>
          </Pane>
          <Splitter />
          <Pane $weight={VOLUME_H}>
            <Axis $side="left" $top={12} $bottom={5}>
              {LABEL_VOLUMES.map((v) => <AxisLabel key={v} $tone="hot">{v}</AxisLabel>)}
            </Axis>
            <VolumePlot />
            <Axis $side="right" $top={12} $bottom={5}>
              {LABEL_OPEN_INTEREST.map((v, i) => <AxisLabel key={i} $tone="plain">{v}</AxisLabel>)}
            </Axis>
          </Pane>
          <TimeRow>
            {TIMES.map((t) => <span key={t}>{t}</span>)}
          </TimeRow>
        </ChartColumn>

        <Sidebar>
          <QuoteHead>
            <QuoteTitle>螺纹2205(rb2205)</QuoteTitle>
            <Corner aria-label="还原窗口">
              <Frame><path d="M3.500 3.500h9v7h-9zM3.500 4.500h9" /></Frame>
            </Corner>
          </QuoteHead>
          <Balance>
            <BalancePart $tone="up" $share={142} />
            <BalancePart $tone="down" $share={96} />
          </Balance>
          <Depth rows={ASKS} best={4} />
          <Depth rows={BIDS} best={0} />
          <Sheet $ruled>
            <colgroup>
              <col width={44} />
              <col width={68} />
              <col width={51} />
              <col width={72} />
              <col />
            </colgroup>
            <tbody>
              {STATS.map(([a, av, at, b, bv, bt]) => (
                <Row key={a} $h={20}>
                  <Name scope="row" $inset={4}>{a}</Name>
                  <Num $tone={at}>{av}</Num>
                  <Name scope="row" $inset={15}>{b}</Name>
                  <Num $tone={bt}>{bv}</Num>
                  <td />
                </Row>
              ))}
            </tbody>
          </Sheet>
          <Sheet>
            <colgroup>
              <col width={40} />
              <col width={67} />
              <col width={49} />
              <col width={48} />
              <col width={36} />
            </colgroup>
            <thead>
              <Row $h={22}>
                <Name $inset={4} $tone="dim">北京</Name>
                <Name $align="right" $tone="dim">价格</Name>
                <Name $align="right" $tone="dim">√大单</Name>
                <Name $align="right" $tone="dim">仓差</Name>
                <Name $inset={7} $tone="dim">性质</Name>
              </Row>
            </thead>
            <tbody>
              {TICKS.map(([time, price, lots, tone, diff, kind], i) => (
                <Row key={i} $h={22}>
                  <Clock $full={time.length > 3}>{time}</Clock>
                  <Num $tone="down">{price}</Num>
                  <Num $tone={tone}>{lots}</Num>
                  <Num $tone="hot">{diff}</Num>
                  <Kind $tone={kind === '多平' || kind === '空开' ? 'down' : 'up'}>{kind}</Kind>
                </Row>
              ))}
            </tbody>
          </Sheet>
          <Tabs>
            <Tab $active>笔</Tab>
            <Tab>价</Tab>
            <TabRest />
          </Tabs>
        </Sidebar>
      </Main>

      <Status>
        <svg width="100%" height="8" aria-hidden="true">
          <g fill="#404040">
            <path d="M188 6h2v1h5v1h-7zM206 7h1v1h-1zM216 7h12v1h-12zM416 6h2v1h5v1h-7zM434 7h1v1h-1zM644 6h2v1h6v1h-8zM662 7h1v1h-1z" />
            <path d="M1833 5h10v1h-3v2h-1V6h-3v2h-1V6h-2zM1852 6h2v2h-2zM1867 7h3v1h-3zM1874 7h3v1h-3zM1884 7h3v1h-3zM1891 7h3v1h-3z" />
          </g>
          <path d="M1807 7h3v1h-3z" fill="#e02020" />
        </svg>
      </Status>
    </Shell>
  );
}
